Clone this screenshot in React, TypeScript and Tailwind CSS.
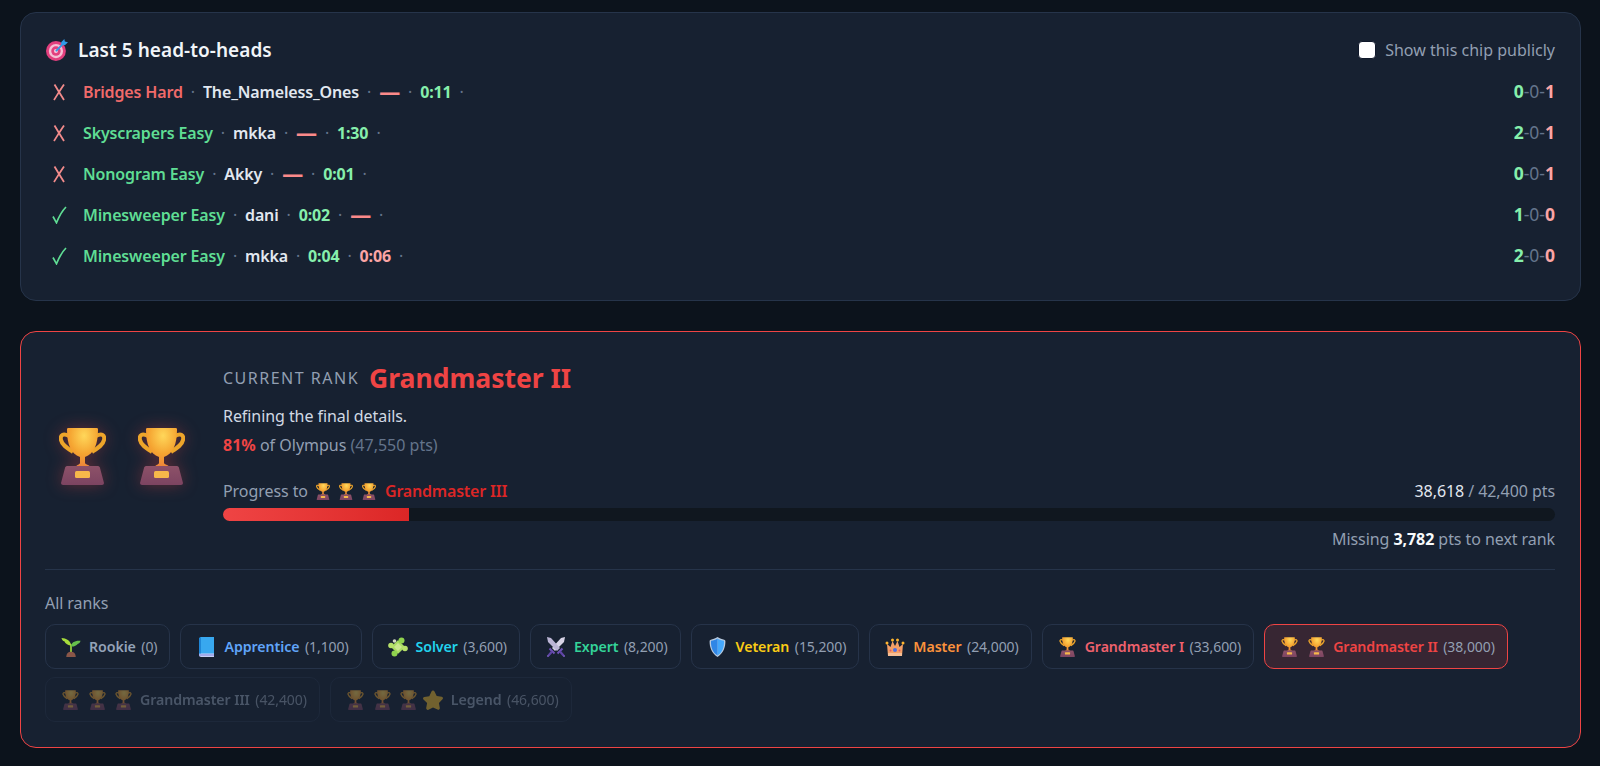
import { useId, type ReactNode } from "react";

function Trophy({ className }: { className: string }) {
  const id = useId();
  return (
    <svg viewBox="0 0 47 58" className={className} aria-hidden>
      <defs>
        <radialGradient id={`${id}c`} cx="0.55" cy="0.2" r="0.85">
          <stop offset="0" stopColor="#ffd75a" />
          <stop offset="0.55" stopColor="#f5a431" />
          <stop offset="1" stopColor="#ec7f3b" />
        </radialGradient>
        <linearGradient id={`${id}b`} x1="0" y1="0" x2="0" y2="1">
          <stop offset="0" stopColor="#8d5168" />
          <stop offset="1" stopColor="#7c4461" />
        </linearGradient>
      </defs>
      <path d="M10 9C4 6 1 8 2 13c1 5 6 8 12 12" fill="none" stroke="#eda52a" strokeWidth="4" />
      <path d="M37 9c6-3 9-1 8 4-1 5-6 8-12 12" fill="none" stroke="#eda52a" strokeWidth="4" />
      <path d="M9 1h29c1 0 1 1 1 2 0 14-4 24-13 27v6c0 1 4 2 6 4H16c2-2 5-3 5-4v-6C12 27 8 17 8 3c0-1 0-2 1-2z" fill={`url(#${id}c)`} />
      <path d="M8 39h31c1 0 2 1 2 2l4 15c0 1-1 2-2 2H4c-1 0-2-1-2-2l4-15c0-1 1-2 2-2z" fill={`url(#${id}b)`} />
      <rect x="16" y="44" width="15" height="7" rx="1.5" fill="#f7b84a" />
    </svg>
  );
}

function Seedling() {
  return (
    <svg viewBox="0 0 20 21" className="h-[20px] w-[20px] shrink-0" aria-hidden>
      <path d="M10 8v8" stroke="#8fc43a" strokeWidth="2" fill="none" />
      <path d="M10.500 9C9.500 4 5 1 0 1c.5 2 1.500 3 3 3.500C4 7 7 9 10.500 9z" fill="#a6dc3c" />
      <path d="M10 10c0-4 4-6.500 10-6-.5 2-1.500 3-3 3.300C15.500 9 13 10.500 10 10z" fill="#67c04c" />
      <path d="M5 21c0-3.500 2-5.500 5-5.500s5 2 5 5.500z" fill="#8a5648" />
    </svg>
  );
}

function Book() {
  return (
    <svg viewBox="0 0 17 20" className="mr-[1px] ml-[2px] h-[20px] w-[17px] shrink-0" aria-hidden>
      <path d="M1 2c0-1 1-2 2-2h13v17H1z" fill="#38a8ef" />
      <path d="M1 16.500h15V20H3c-1 0-2-1-2-1.500z" fill="#c7cff5" />
      <path d="M1 18h15" stroke="#6d74d8" strokeWidth="0.8" />
      <path d="M1 2c0-1 1-2 2-2v16.500H1z" fill="#1f86d6" />
    </svg>
  );
}

function Puzzle() {
  return (
    <svg viewBox="0 0 20 20" className="h-[20px] w-[20px] shrink-0" aria-hidden>
      <rect x="5" y="5" width="10" height="10" rx="1" transform="rotate(45 10 10)" fill="#a9dc62" />
      <circle cx="13.500" cy="3.500" r="3" fill="#8fd24e" />
      <circle cx="17" cy="11.500" r="2.800" fill="#b6e06a" />
      <circle cx="6.500" cy="16.500" r="3" fill="#8fd24e" />
      <circle cx="3" cy="8.500" r="2.800" fill="#b6e06a" />
      <circle cx="6.500" cy="4" r="1.800" fill="#d4d9c4" />
      <path d="M10 6l4 4-4 4-4-4z" fill="#cbe690" />
    </svg>
  );
}

function Swords() {
  return (
    <svg viewBox="0 0 20 20" className="h-[20px] w-[20px] shrink-0" aria-hidden>
      <path d="M19 0l-1 5-9 9-3-3 9-10z" fill="#d7d3e6" />
      <path d="M1 0l1 5 9 9 3-3L5 1z" fill="#bcb6d6" />
      <path d="M3.500 11.500l5 5M16.500 11.500l-5 5" stroke="#6f52b8" strokeWidth="2" />
      <path d="M6 14.500L2.500 18.500M14 14.500l3.500 4" stroke="#5f44a6" strokeWidth="2.200" />
      <circle cx="2" cy="19" r="1" fill="#7b5cc4" />
      <circle cx="18" cy="19" r="1" fill="#7b5cc4" />
    </svg>
  );
}

function Shield() {
  return (
    <svg viewBox="0 0 17 21" className="mr-[2px] ml-[2px] h-[20px] w-[17px] shrink-0" aria-hidden>
      <path d="M8.500 0c2.500 1.800 5 2.500 7 2.800.8.100 1.300.7 1.300 1.500C17 11 14.500 17 8.500 21 2.500 17 0 11 .2 4.300c0-.8.500-1.400 1.300-1.500 2-.3 4.500-1 7-2.800z" fill="#b8cadf" />
      <path d="M8.500 1.500c2 1.500 4.300 2.200 6.800 2.500.4 7-1.800 12.500-6.800 15.500z" fill="#45a8fc" />
      <path d="M8.500 1.500v18C3.500 16.500 1.300 11 1.700 4c2.500-.3 4.800-1 6.800-2.500z" fill="#2f86e6" />
    </svg>
  );
}

function Crown() {
  return (
    <svg viewBox="0 0 20 18" className="h-[18px] w-[20px] shrink-0" aria-hidden>
      <path d="M2 6l3.500 3L7.500 3 10 8l2.500-5 2 6L18 6l-1 12H3z" fill="#f59f66" />
      <path d="M3 15h14v3H3z" fill="#f7bd94" />
      <circle cx="2" cy="5" r="1.500" fill="#ffb52e" />
      <circle cx="18" cy="5" r="1.500" fill="#ffb52e" />
      <circle cx="7.500" cy="2" r="1.500" fill="#ffb52e" />
      <circle cx="12.500" cy="2" r="1.500" fill="#ffb52e" />
      <circle cx="10" cy="12" r="2" fill="#4f6fe0" />
      <circle cx="5.500" cy="12.500" r="1" fill="#e0566a" />
      <circle cx="14.500" cy="12.500" r="1" fill="#e0566a" />
    </svg>
  );
}

function Star() {
  return (
    <svg viewBox="0 0 20 20" className="h-[20px] w-[20px] shrink-0" aria-hidden>
      <path
        d="M10 0.500c.7 0 1.200.4 1.500 1l2.200 4.600 5 .7c1.200.2 1.700 1.700.8 2.500l-3.600 3.600.9 5.100c.2 1.200-1.100 2.200-2.200 1.600L10 17.400l-4.600 2.300c-1.100.6-2.400-.4-2.200-1.600l.9-5.100L.5 9.400c-.9-.8-.4-2.300.8-2.500l5-.7 2.200-4.600c.3-.6.800-1 1.500-1z"
        fill="#f9c22e"
      />
    </svg>
  );
}

function Target() {
  return (
    <svg viewBox="0 0 21 21" className="h-[22px] w-[22px] shrink-0" aria-hidden>
      <circle cx="9.500" cy="11.500" r="9.500" fill="#e23f7e" />
      <circle cx="9.500" cy="11.500" r="6.800" fill="#f5bfd4" />
      <circle cx="9.500" cy="11.500" r="4.500" fill="#e23f7e" />
      <circle cx="9.500" cy="11.500" r="2" fill="#f5bfd4" />
      <path d="M9.500 11.500L17 4" stroke="#2f9be8" strokeWidth="1.800" />
      <path d="M14.500 3l3-3 .5 2.500L21 3l-3 3-3.500-.5z" fill="#2f9be8" />
    </svg>
  );
}

function Mark({ won }: { won: boolean }) {
  return (
    <svg viewBox="0 0 16 18" className="h-[18px] w-[16px] shrink-0" aria-hidden>
      {won ? (
        <path d="M1 10.500L4.500 16.800C7 10.500 9.500 5.500 14 1" fill="none" stroke="#5fdd94" strokeWidth="1.700" />
      ) : (
        <path d="M2.500 1.500c3 5 6 10 9.500 15.500M12 1.500C8.500 6.500 5.500 11.500 2 17" fill="none" stroke="#f28b8b" strokeWidth="1.800" />
      )}
    </svg>
  );
}

type Match = {
  won: boolean;
  game: string;
  gameColor: string;
  rival: string;
  mine: string | null;
  theirs: string | null;
  score: [number, number, number];
};

const matches: Match[] = [
  { won: false, game: "Bridges Hard", gameColor: "text-[#f06a6a]", rival: "The_Nameless_Ones", mine: null, theirs: "0:11", score: [0, 0, 1] },
  { won: false, game: "Skyscrapers Easy", gameColor: "text-[#5fdd94]", rival: "mkka", mine: null, theirs: "1:30", score: [2, 0, 1] },
  { won: false, game: "Nonogram Easy", gameColor: "text-[#5fdd94]", rival: "Akky", mine: null, theirs: "0:01", score: [0, 0, 1] },
  { won: true, game: "Minesweeper Easy", gameColor: "text-[#5fdd94]", rival: "dani", mine: "0:02", theirs: null, score: [1, 0, 0] },
  { won: true, game: "Minesweeper Easy", gameColor: "text-[#5fdd94]", rival: "mkka", mine: "0:04", theirs: "0:06", score: [2, 0, 0] },
];

function Dot() {
  return <span className="font-normal text-[#64748b]">·</span>;
}

function Time({ value, good }: { value: string | null; good: boolean }) {
  if (!value) return <span className="pt-[2px] text-[21px] leading-none font-bold text-[#fb8a8a]">—</span>;
  return <span className={`font-bold ${good ? "text-[#86efac]" : "text-[#fca5a5]"}`}>{value}</span>;
}

function MatchRow({ m }: { m: Match }) {
  return (
    <div className="flex h-[41px] items-center justify-between">
      <div className="flex items-center">
        <div className="w-[37px] shrink-0 pl-[6px]">
          <Mark won={m.won} />
        </div>
        <div className="flex items-center gap-[8px] text-[16px] font-semibold tracking-[-0.15px]">
          <span className={m.gameColor}>{m.game}</span>
          <Dot />
          <span className="text-[#e2e8f0]">{m.rival}</span>
          <Dot />
          <Time value={m.mine} good />
          <Dot />
          <Time value={m.theirs} good={!m.won} />
          <Dot />
        </div>
      </div>
      <div className="text-[17.500px] text-[#64748b]">
        <span className="font-bold text-[#86efac]">{m.score[0]}</span>-{m.score[1]}-
        <span className="font-bold text-[#fca5a5]">{m.score[2]}</span>
      </div>
    </div>
  );
}

type Rank = {
  icons: ReactNode;
  name: string;
  pts: string;
  color: string;
  active?: boolean;
};

const cup = "mr-[1px] ml-[1px] h-[20px] w-[17px] shrink-0";
const nextCup = "ml-[9px] h-[20px] w-[17px] shrink-0";

const ranksTop: Rank[] = [
  { icons: <Seedling />, name: "Rookie", pts: "(0)", color: "text-[#94a3b8]" },
  { icons: <Book />, name: "Apprentice", pts: "(1,100)", color: "text-[#60a5fa]" },
  { icons: <Puzzle />, name: "Solver", pts: "(3,600)", color: "text-[#22d3ee]" },
  { icons: <Swords />, name: "Expert", pts: "(8,200)", color: "text-[#34d399]" },
  { icons: <Shield />, name: "Veteran", pts: "(15,200)", color: "text-[#facc15]" },
  { icons: <Crown />, name: "Master", pts: "(24,000)", color: "text-[#fb923c]" },
  { icons: <Trophy className={cup} />, name: "Grandmaster I", pts: "(33,600)", color: "text-[#f0616d]" },
  {
    icons: (
      <>
        <Trophy className={cup} />
        <Trophy className={nextCup} />
      </>
    ),
    name: "Grandmaster II",
    pts: "(38,000)",
    color: "text-[#ef4444]",
    active: true,
  },
];

const ranksLocked: Rank[] = [
  {
    icons: (
      <>
        <Trophy className={cup} />
        <Trophy className={nextCup} />
        <Trophy className={nextCup} />
      </>
    ),
    name: "Grandmaster III",
    pts: "(42,400)",
    color: "text-[#94a3b8]",
  },
  {
    icons: (
      <>
        <Trophy className={cup} />
        <Trophy className={nextCup} />
        <Trophy className={nextCup} />
        <span className="ml-[6px]">
          <Star />
        </span>
      </>
    ),
    name: "Legend",
    pts: "(46,600)",
    color: "text-[#94a3b8]",
  },
];

function RankChip({ rank, locked }: { rank: Rank; locked?: boolean }) {
  return (
    <div
      className={`flex h-[45px] items-center rounded-[10px] border pr-[12px] pl-[15px] text-[14px] tracking-[-0.08px] ${
        rank.active ? "border-[#ef4444] bg-[#ef4444]/15" : "border-[#263349]"
      } ${locked ? "opacity-40" : ""}`}
    >
      {rank.icons}
      <span className={`ml-[8px] text-[14.200px] font-semibold ${rank.color}`}>{rank.name}</span>
      <span className="ml-[5.500px] text-[#929fb2]">{rank.pts}</span>
    </div>
  );
}

export default function App() {
  return (
    <div className="flex h-[766px] flex-col gap-[30px] overflow-hidden bg-[#0c131c] pt-[12px] pr-[19px] pl-[20px] font-['Noto_Sans',sans-serif] text-[#e2e8f0]">
      <section className="h-[289px] rounded-[16px] border border-[#26344a] bg-[#172131] px-[25px] pt-[24px]">
        <div className="flex h-[26px] items-center justify-between">
          <div className="flex items-center gap-[10px]">
            <Target />
            <h2 className="text-[19px] font-semibold tracking-[0.05px] text-[#f1f5f9]">Last 5 head-to-heads</h2>
          </div>
          <label className="flex items-center gap-[9px] text-[16px] text-[#929fb2]">
            <span className="h-[18px] w-[18px] rounded-[4px] border border-[#0f172a] bg-white" />
            Show this chip publicly
          </label>
        </div>
        <div className="mt-[8px]">
          {matches.map((m, i) => (
            <MatchRow key={i} m={m} />
          ))}
        </div>
      </section>

      <section className="h-[417px] rounded-[16px] border border-[#ef4444] bg-[#172131] pt-[26px] pr-[25px] pl-[24px]">
        <div className="flex">
          <div className="flex w-[178px] shrink-0 items-center gap-[32px] pt-[2px] pl-[14px]">
            <Trophy className="h-[58px] w-[47px] shrink-0 drop-shadow-[0_0_8px_rgba(239,68,68,0.35)]" />
            <Trophy className="h-[58px] w-[47px] shrink-0 drop-shadow-[0_0_8px_rgba(239,68,68,0.35)]" />
          </div>
          <div className="min-w-0 flex-1">
            <div className="flex items-center gap-[10px]">
              <span className="text-[16px] tracking-[1.5px] text-[#929fb2]">CURRENT RANK</span>
              <span className="text-[26.500px] leading-[40px] font-bold text-[#ef4444]">Grandmaster II</span>
            </div>
            <p className="mt-[6px] text-[16px] leading-[24px] tracking-[-0.07px] text-[#d1d9e4]">Refining the final details.</p>
            <p className="mt-[5px] text-[16px] leading-[24px] text-[#929fb2]">
              <span className="font-bold text-[#ef4444]">81%</span> of Olympus{" "}
              <span className="text-[#64748b]">(47,550 pts)</span>
            </p>
            <div className="mt-[22px] flex h-[24px] items-center justify-between text-[16px] tracking-[-0.07px]">
              <div className="flex items-center text-[#929fb2]">
                <span>Progress to</span>
                <Trophy className="ml-[8px] h-[17px] w-[14px] shrink-0" />
                <Trophy className="ml-[9px] h-[17px] w-[14px] shrink-0" />
                <Trophy className="ml-[9px] h-[17px] w-[14px] shrink-0" />
                <span className="ml-[9px] font-semibold tracking-[-0.2px] text-[#dc2626]">Grandmaster III</span>
              </div>
              <div className="text-[#929fb2]">
                <span className="text-[#e2e8f0]">38,618</span> / 42,400 pts
              </div>
            </div>
            <div className="mt-[5px] h-[13px] overflow-hidden rounded-full bg-[#10171f]">
              <div className="h-full w-[14%] bg-gradient-to-r from-[#ef4444] to-[#dc2626]" />
            </div>
            <div className="mt-[6px] text-right text-[16px] leading-[24px] tracking-[-0.07px] text-[#929fb2]">
              Missing <span className="font-bold text-[#f8fafc]">3,782</span> pts to next rank
            </div>
          </div>
        </div>

        <div className="mt-[18px] border-t border-[#26344a] pt-[22px]">
          <div className="text-[16px] leading-[22px] tracking-[-0.07px] text-[#929fb2]">All ranks</div>
          <div className="mt-[10px] flex flex-wrap gap-x-[10px] gap-y-[8px]">
            {ranksTop.map((r) => (
              <RankChip key={r.name} rank={r} />
            ))}
            {ranksLocked.map((r) => (
              <RankChip key={r.name} rank={r} locked />
            ))}
          </div>
        </div>
      </section>
    </div>
  );
}
